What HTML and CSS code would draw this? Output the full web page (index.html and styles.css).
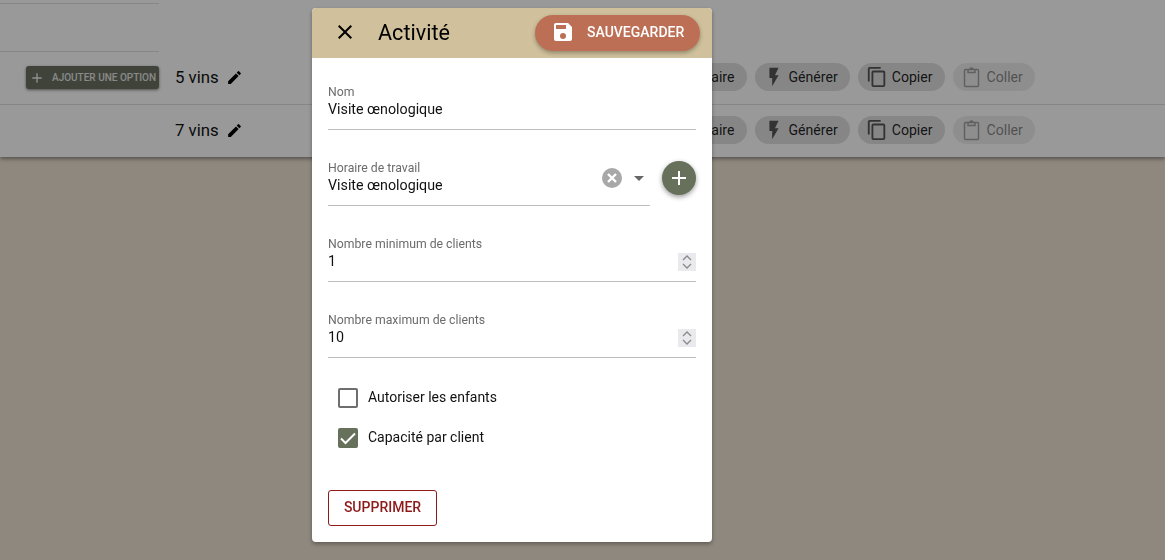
FILE: index.html
```html
<!DOCTYPE html>
<html lang="fr">
<head>
  <meta charset="UTF-8">
  <title>Activité</title>
  <link rel="stylesheet" href="styles.css">
</head>
<body>
  <div class="table">
    <div class="table-head">
      <div class="head-cell"></div>
    </div>
    <div class="table-row">
      <div class="option-cell">
        <button class="add-option">
          <svg viewBox="0 0 24 24" class="add-icon"><path d="M19 13h-6v6h-2v-6H5v-2h6V5h2v6h6z"/></svg>
          AJOUTER UNE OPTION
        </button>
      </div>
      <div class="name-cell">
        <span>5 vins</span>
        <svg viewBox="0 0 24 24" class="edit-icon"><path d="M3 17.25V21h3.75L17.81 9.94l-3.75-3.75L3 17.25zM20.71 7.04a1 1 0 0 0 0-1.41l-2.34-2.34a1 1 0 0 0-1.41 0l-1.83 1.83 3.75 3.75 1.83-1.83z"/></svg>
      </div>
      <div class="chips">
        <span class="chip chip-hours">Horaire</span>
        <span class="chip"><svg viewBox="0 0 24 24"><path d="M7 2v11h3v9l7-12h-4l4-8z"/></svg>Générer</span>
        <span class="chip"><svg viewBox="0 0 24 24"><path d="M16 1H4a2 2 0 0 0-2 2v14h2V3h12V1zm3 4H8a2 2 0 0 0-2 2v14a2 2 0 0 0 2 2h11a2 2 0 0 0 2-2V7a2 2 0 0 0-2-2zm0 16H8V7h11v14z"/></svg>Copier</span>
        <span class="chip chip-off"><svg viewBox="0 0 15 20" class="paste-icon"><path d="M1.5 2.5h12a1 1 0 0 1 1 1v15a1 1 0 0 1-1 1h-12a1 1 0 0 1-1-1v-15a1 1 0 0 1 1-1zM4 2.5v3h7v-3M6 2.5a1.5 1.5 0 0 1 3 0"/></svg>Coller</span>
      </div>
    </div>
    <div class="table-row">
      <div class="option-cell"></div>
      <div class="name-cell">
        <span>7 vins</span>
        <svg viewBox="0 0 24 24" class="edit-icon"><path d="M3 17.25V21h3.75L17.81 9.94l-3.75-3.75L3 17.25zM20.71 7.04a1 1 0 0 0 0-1.41l-2.34-2.34a1 1 0 0 0-1.41 0l-1.83 1.83 3.75 3.75 1.83-1.83z"/></svg>
      </div>
      <div class="chips">
        <span class="chip chip-hours">Horaire</span>
        <span class="chip"><svg viewBox="0 0 24 24"><path d="M7 2v11h3v9l7-12h-4l4-8z"/></svg>Générer</span>
        <span class="chip"><svg viewBox="0 0 24 24"><path d="M16 1H4a2 2 0 0 0-2 2v14h2V3h12V1zm3 4H8a2 2 0 0 0-2 2v14a2 2 0 0 0 2 2h11a2 2 0 0 0 2-2V7a2 2 0 0 0-2-2zm0 16H8V7h11v14z"/></svg>Copier</span>
        <span class="chip chip-off"><svg viewBox="0 0 15 20" class="paste-icon"><path d="M1.5 2.5h12a1 1 0 0 1 1 1v15a1 1 0 0 1-1 1h-12a1 1 0 0 1-1-1v-15a1 1 0 0 1 1-1zM4 2.5v3h7v-3M6 2.5a1.5 1.5 0 0 1 3 0"/></svg>Coller</span>
      </div>
    </div>
  </div>

  <div class="backdrop"></div>

  <div class="modal">
    <div class="modal-header">
      <svg viewBox="0 0 24 24" class="close-icon"><path d="M19 6.41 17.59 5 12 10.59 6.41 5 5 6.41 10.59 12 5 17.59 6.41 19 12 13.41 17.59 19 19 17.59 13.41 12z"/></svg>
      <h2 class="modal-title">Activité</h2>
      <button class="save-btn">
        <svg viewBox="0 0 24 24"><path d="M17 3H5a2 2 0 0 0-2 2v14a2 2 0 0 0 2 2h14a2 2 0 0 0 2-2V7l-4-4zm-5 16a3 3 0 1 1 0-6 3 3 0 0 1 0 6zm3-10H5V5h10v4z"/></svg>
        SAUVEGARDER
      </button>
    </div>
    <div class="modal-body">
      <div class="field">
        <label>Nom</label>
        <div class="field-value">Visite œnologique</div>
      </div>
      <div class="field-row">
        <div class="field field-select">
          <label>Horaire de travail</label>
          <div class="field-value">Visite œnologique</div>
          <span class="clear-btn">
            <svg viewBox="0 0 20 20"><path d="M6 6l8 8M14 6l-8 8"/></svg>
          </span>
          <span class="select-arrow"></span>
        </div>
        <button class="fab">
          <svg viewBox="0 0 24 24"><path d="M19 13h-6v6h-2v-6H5v-2h6V5h2v6h6z"/></svg>
        </button>
      </div>
      <div class="field">
        <label>Nombre minimum de clients</label>
        <div class="field-value">1</div>
        <span class="spinner"><svg viewBox="0 0 18 18"><path d="M5 7l4-4 4 4M5 11l4 4 4-4"/></svg></span>
      </div>
      <div class="field">
        <label>Nombre maximum de clients</label>
        <div class="field-value">10</div>
        <span class="spinner"><svg viewBox="0 0 18 18"><path d="M5 7l4-4 4 4M5 11l4 4 4-4"/></svg></span>
      </div>
      <div class="check-list">
        <div class="check-row"><span class="box"></span>Autoriser les enfants</div>
        <div class="check-row"><span class="box box-on"><svg viewBox="0 0 20 20"><path d="M3 10.5l4.5 4.5L17 5.5"/></svg></span>Capacité par client</div>
      </div>
      <button class="delete-btn">SUPPRIMER</button>
    </div>
  </div>
</body>
</html>
```

FILE: styles.css
```css
html, body {
  margin: 0;
  padding: 0;
  height: 100%;
}
body {
  font-family: Roboto, sans-serif;
  background-color: #eee3d4;
  overflow: hidden;
  color: #000;
}
button {
  font-family: Roboto, sans-serif;
  border: none;
}
.table {
  background: #fff;
  height: 157px;
  box-shadow: 0 2px 4px rgba(0, 0, 0, 0.4);
}
.table-head {
  height: 52px;
  box-sizing: border-box;
  padding-top: 3px;
}
.head-cell {
  width: 159px;
  height: 49px;
  box-sizing: border-box;
  border-top: 1px solid #e0e0e0;
  border-bottom: 1px solid #e0e0e0;
}
.table-row {
  height: 53px;
  box-sizing: border-box;
  padding-bottom: 2px;
  display: flex;
  align-items: center;
  border-bottom: 1px solid #e0e0e0;
}
.table-row:last-child {
  height: 52px;
  border-bottom: none;
}
.option-cell {
  width: 159px;
  flex: none;
  margin-top: 1px;
  display: flex;
  justify-content: flex-end;
}
.add-option {
  width: 133px;
  height: 23px;
  padding: 0 0 0 3px;
  display: flex;
  align-items: center;
  gap: 7px;
  white-space: nowrap;
  background: #6b7161;
  color: #e4e4e4;
  font-size: 10px;
  font-weight: 500;
  border-radius: 3px;
  box-shadow: 0 1px 3px rgba(0, 0, 0, 0.5);
}
.add-icon {
  width: 16px;
  height: 16px;
  fill: #f0f0f0;
  flex: none;
}
.name-cell {
  width: 250px;
  flex: none;
  box-sizing: border-box;
  padding-left: 16px;
  display: flex;
  align-items: center;
  gap: 7px;
  font-size: 16.8px;
  color: #111;
}
.edit-icon {
  width: 17px;
  height: 17px;
  fill: #000;
}
.chips {
  display: flex;
  margin-left: 249.5px;
  gap: 8px;
}
.chip {
  height: 28px;
  box-sizing: border-box;
  padding: 0 12px 0 8px;
  display: flex;
  align-items: center;
  gap: 4px;
  white-space: nowrap;
  background: #e0e0e0;
  border-radius: 14px;
  font-size: 14.1px;
  color: rgba(0, 0, 0, 0.87);
}
.chip svg {
  width: 22px;
  height: 22px;
  fill: #555;
}
.chip-hours {
  width: 88px;
  justify-content: flex-end;
}
.chip-off {
  padding-left: 11px;
  gap: 8px;
  opacity: 0.55;
}
.chip svg.paste-icon {
  width: 15px;
  height: 20px;
  fill: none;
  stroke: #555;
  stroke-width: 1.5;
  overflow: visible;
}
.backdrop {
  position: fixed;
  inset: 0;
  background: rgba(0, 0, 0, 0.4);
}
.modal {
  position: fixed;
  top: 8px;
  left: 312px;
  width: 400px;
  height: 534px;
  background: #fff;
  border-radius: 4px;
  box-shadow: 0 2px 4px rgba(0, 0, 0, 0.35);
  overflow: hidden;
}
.modal-header {
  height: 50px;
  box-sizing: border-box;
  background: #d0c19c;
  display: flex;
  align-items: center;
  padding: 0 12px 2px 21px;
}
.close-icon {
  width: 24px;
  height: 24px;
  fill: #000;
  flex: none;
}
.modal-title {
  margin: 0 0 0 21px;
  font-size: 21.6px;
  font-weight: 400;
  flex: 1;
}
.save-btn {
  width: 165px;
  height: 36px;
  margin-top: 2px;
  padding: 0 0 2px 16px;
  display: flex;
  align-items: center;
  gap: 12px;
  background: #bd6f55;
  color: #fff;
  font-size: 14px;
  font-weight: 500;
  border-radius: 18px;
  box-shadow: 0 2px 4px rgba(0, 0, 0, 0.3);
}
.save-btn svg {
  width: 24px;
  height: 24px;
  fill: #fff;
  flex: none;
}
.modal-body {
  padding: 26px 16px 0;
}
.field {
  position: relative;
  height: 46px;
  box-sizing: border-box;
  padding-top: 1px;
  border-bottom: 1px solid #bdbdbd;
  margin-bottom: 30px;
}
.field label {
  display: block;
  font-size: 12.25px;
  line-height: 14px;
  color: #6b6b6b;
}
.field-value {
  font-size: 14.25px;
  line-height: 20px;
  color: #111;
}
.field-row {
  display: flex;
  gap: 12px;
}
.field-select {
  flex: 1;
}
.clear-btn {
  position: absolute;
  right: 28px;
  top: 8px;
  width: 20px;
  height: 20px;
  border-radius: 50%;
  background: #a8a8a8;
}
.clear-btn svg {
  display: block;
  fill: none;
  stroke: #fff;
  stroke-width: 2.4;
}
.select-arrow {
  position: absolute;
  right: 6px;
  top: 16px;
  border-left: 5px solid transparent;
  border-right: 5px solid transparent;
  border-top: 5px solid #666;
}
.fab {
  width: 34px;
  height: 34px;
  margin-top: 1px;
  padding: 5px;
  background: #66705a;
  border-radius: 50%;
  box-shadow: 0 2px 5px rgba(0, 0, 0, 0.4);
}
.fab svg {
  display: block;
  width: 24px;
  height: 24px;
  fill: #fff;
}
.spinner {
  position: absolute;
  right: 0;
  top: 17px;
  width: 18px;
  height: 18px;
  background: #e9e9ee;
}
.spinner svg {
  display: block;
  fill: none;
  stroke: #8a8a8a;
  stroke-width: 1.3;
}
.check-list {
  padding-left: 10px;
  margin-top: 28px;
  display: flex;
  flex-direction: column;
  gap: 20px;
}
.check-row {
  display: flex;
  align-items: flex-start;
  gap: 10px;
  height: 20px;
  font-size: 14px;
  line-height: 18px;
  color: #111;
}
.box {
  width: 20px;
  height: 20px;
  box-sizing: border-box;
  border: 2px solid #6e6e6e;
  border-radius: 2px;
}
.box-on {
  background: #66705a;
  border: none;
}
.box-on svg {
  display: block;
  fill: none;
  stroke: #fff;
  stroke-width: 2;
}
.delete-btn {
  display: block;
  margin-top: 42px;
  width: 109px;
  height: 36px;
  padding: 0 0 2px;
  background: #fff;
  border: 1px solid #8e1a1a;
  border-radius: 3px;
  color: #8e1a1a;
  font-size: 14px;
  font-weight: 500;
}
```
